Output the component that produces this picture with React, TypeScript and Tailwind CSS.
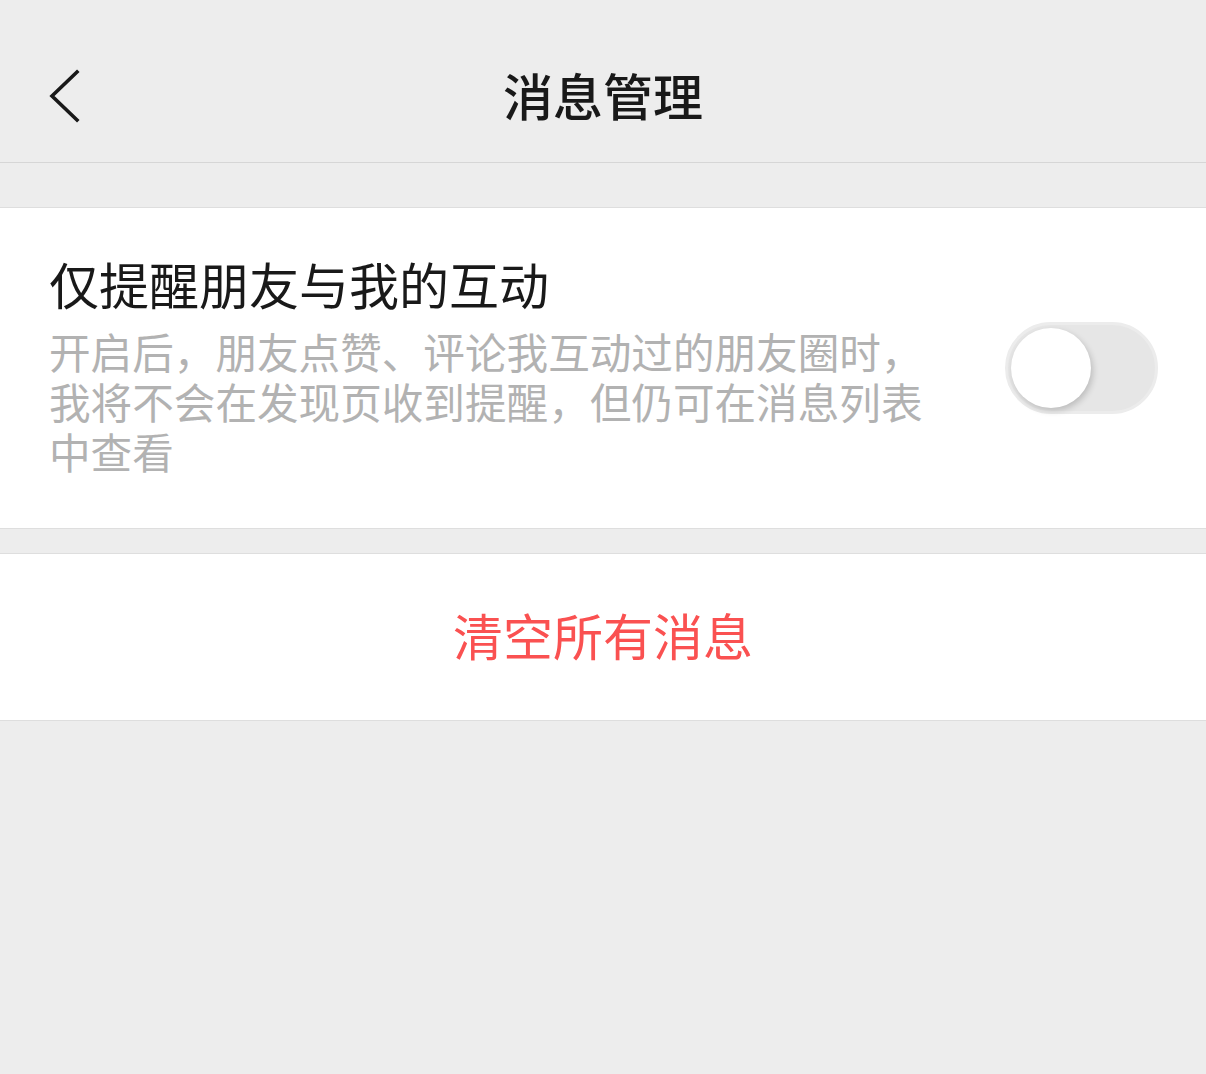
import React, { useState } from 'react';

const font = { fontFamily: '"Noto Sans CJK SC", "Noto Sans", sans-serif' };

const BackIcon = () => (
  <svg width="40" height="60" viewBox="0 0 40 60" className="block">
    <polyline
      points="29,6 4,30 29,54"
      fill="none"
      stroke="#191919"
      strokeWidth="3.6"
      strokeLinecap="square"
      strokeLinejoin="miter"
    />
  </svg>
);

const Toggle: React.FC<{ on: boolean; onChange: () => void }> = ({ on, onChange }) => (
  <button
    onClick={onChange}
    className={`relative w-[153px] h-[92px] rounded-full shrink-0 border-[3px] transition-colors ${
      on ? 'bg-[#07c160] border-[#07c160]' : 'bg-[#e6e6e6] border-[#ececec]'
    }`}
  >
    <span
      className={`absolute top-[3px] w-[80px] h-[80px] rounded-full bg-white shadow-[2px_3px_6px_rgba(0,0,0,0.18)] transition-all ${
        on ? 'left-[64px]' : 'left-[3px]'
      }`}
    />
  </button>
);

export default function App() {
  const [onlyFriends, setOnlyFriends] = useState(false);

  return (
    <div className="min-h-[1074px] bg-[#ededed]" style={font}>
      {/* Nav bar */}
      <div className="h-[163px] border-b border-[#d6d6d6] flex items-center px-[48px] relative">
        <div className="pt-[29px]">
          <BackIcon />
        </div>
        <h1 className="absolute inset-x-0 top-[64px] text-center text-[50px] leading-[60px] font-medium text-[#191919] pointer-events-none">
          消息管理
        </h1>
      </div>

      <div className="h-[44px]" />

      {/* Setting */}
      <div className="bg-white border-y border-[#dedede] h-[322px] flex items-center justify-between pl-[49px] pr-[48px]">
        <div className="max-w-[880px] pb-[7px]">
          <div className="text-[50px] leading-[60px] text-[#191919]">仅提醒朋友与我的互动</div>
          <p className="mt-[13px] text-[41.6px] leading-[50px] text-[#b2b2b2]">
            开启后，朋友点赞、评论我互动过的朋友圈时，我将不会在发现页收到提醒，但仍可在消息列表中查看
          </p>
        </div>
        <Toggle on={onlyFriends} onChange={() => setOnlyFriends(!onlyFriends)} />
      </div>

      <div className="h-[24px]" />

      {/* Clear */}
      <div className="bg-white border-y border-[#dedede] h-[168px] flex items-center justify-center">
        <button className="text-[50px] leading-[60px] text-[#fa5151] pb-[6px]">清空所有消息</button>
      </div>
    </div>
  );
}
